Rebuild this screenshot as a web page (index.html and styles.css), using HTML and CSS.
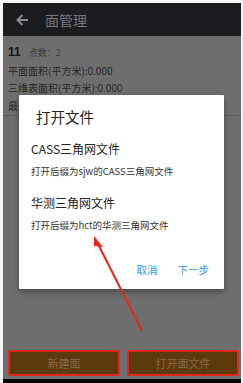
FILE: index.html
```html
<!DOCTYPE html>
<html>
<head>
<meta charset="utf-8">
<link rel="stylesheet" href="styles.css">
</head>
<body>
<div class="frame">
  <div class="header">
    <svg class="back" width="14" height="14" viewBox="0 0 14 14"><path d="M13 7H2.5M7.5 2L2.5 7l5 5" fill="none" stroke="#8a8b8e" stroke-width="2"/></svg>
    <span class="title">面管理</span>
  </div>
  <div class="content">
    <div class="row first"><b class="num">11</b><span class="pts">点数：2</span></div>
    <div class="row">平面面积(平方米):0.000</div>
    <div class="row">三维表面积(平方米):0.000</div>
    <div class="row">最</div>
    <div class="sep"></div>
    <div class="spacer"></div>
    <div class="buttons">
      <div class="btn">新建面</div>
      <div class="btn">打开面文件</div>
    </div>
  </div>
  <div class="navbar"></div>

  <div class="dialog">
    <div class="dtitle">打开文件</div>
    <div class="item">
      <div class="iname">CASS三角网文件</div>
      <div class="idesc">打开后缀为sjw的CASS三角网文件</div>
    </div>
    <div class="item">
      <div class="iname">华测三角网文件</div>
      <div class="idesc">打开后缀为hct的华测三角网文件</div>
    </div>
    <div class="actions">
      <span class="act">取消</span>
      <span class="act">下一步</span>
    </div>
  </div>

  <svg class="arrow" width="243" height="383" viewBox="0 0 243 383">
    <line x1="142" y1="331" x2="98" y2="244" stroke="#e5271d" stroke-width="2"/>
    <path d="M94 236 L103 247 L94 246 Z" fill="#e5271d"/>
  </svg>
</div>
</body>
</html>
```

FILE: styles.css
```css
html, body {
  margin: 0;
  padding: 0;
  background: #f6f6f6;
  width: 243px;
  height: 383px;
  overflow: hidden;
}
.frame {
  position: relative;
  margin: 3px 2px 0 3px;
  width: 238px;
  height: 380px;
  display: flex;
  flex-direction: column;
  font-family: "Noto Sans CJK SC", "Noto Sans", sans-serif;
}
.header {
  height: 33px;
  background: #1b1c20;
  display: flex;
  align-items: center;
  flex: none;
}
.back {
  margin-left: 12px;
}
.title {
  margin-left: 16px;
  color: #77787b;
  font-size: 14px;
}
.content {
  flex: 1;
  background: #6e6e6e;
  display: flex;
  flex-direction: column;
}
.row {
  color: #262626;
  font-size: 10px;
  line-height: 17.5px;
  padding-left: 5px;
  white-space: nowrap;
}
.row.first {
  margin-top: 8px;
  display: flex;
  align-items: baseline;
}
.num {
  font-size: 12px;
  font-weight: bold;
  color: #161616;
  font-family: "Liberation Sans", sans-serif;
}
.pts {
  margin-left: 8px;
  font-size: 9px;
  color: #3a3a3a;
}
.sep {
  height: 1px;
  background: #5c5c5c;
  margin-top: 1px;
}
.spacer {
  flex: 1;
}
.buttons {
  display: flex;
  gap: 7px;
  padding-left: 5px;
  margin-bottom: 3px;
}
.btn {
  width: 108px;
  height: 22px;
  background: #5d3a0d;
  border: 2px solid #e3261c;
  border-radius: 2px;
  color: #86684a;
  font-size: 11px;
  display: flex;
  align-items: center;
  justify-content: center;
}
.navbar {
  height: 4px;
  background: #050505;
  flex: none;
}
.dialog {
  position: absolute;
  left: 16px;
  top: 92px;
  width: 205px;
  height: 194px;
  background: #ffffff;
  box-shadow: 0 3px 6px rgba(0,0,0,0.35);
  border-radius: 1px;
  box-sizing: border-box;
  padding: 12px 0 0 12px;
}
.dtitle {
  font-size: 14.5px;
  color: #222;
  padding-left: 5px;
  line-height: 20px;
}
.item {
  margin-top: 14px;
}
.item + .item {
  margin-top: 17px;
}
.iname {
  font-size: 12px;
  color: #222;
  line-height: 16px;
}
.idesc {
  margin-top: 7px;
  font-size: 9.5px;
  color: #333;
  line-height: 14px;
}
.actions {
  display: flex;
  justify-content: flex-end;
  gap: 20px;
  padding-right: 15px;
  margin-top: 30px;
}
.act {
  color: #2e9ed8;
  font-size: 10.5px;
}
.arrow {
  position: absolute;
  left: -3px;
  top: -3px;
  pointer-events: none;
}
```
